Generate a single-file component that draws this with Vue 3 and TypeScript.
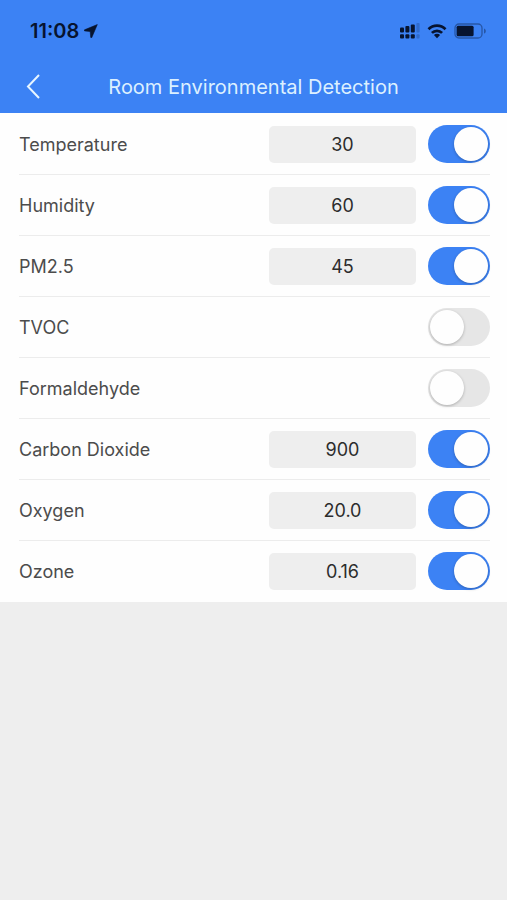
<script setup lang="ts">
import { ref } from 'vue'

interface Sensor {
  id: string
  name: string
  value: string
  enabled: boolean
}

const sensors = ref<Sensor[]>([
  { id: 'temperature', name: 'Temperature', value: '30', enabled: true },
  { id: 'humidity', name: 'Humidity', value: '60', enabled: true },
  { id: 'pm25', name: 'PM2.5', value: '45', enabled: true },
  { id: 'tvoc', name: 'TVOC', value: '', enabled: false },
  { id: 'formaldehyde', name: 'Formaldehyde', value: '', enabled: false },
  { id: 'co2', name: 'Carbon Dioxide', value: '900', enabled: true },
  { id: 'oxygen', name: 'Oxygen', value: '20.0', enabled: true },
  { id: 'ozone', name: 'Ozone', value: '0.16', enabled: true },
])
</script>

<template>
  <div class="screen">
    <header class="header">
      <div class="status">
        <div class="clock">
          <span>11:08</span>
          <svg width="14" height="14" viewBox="0 0 14 14" aria-hidden="true">
            <path d="M13.3.6.6 5.8c-.6.3-.5 1 .2 1.1l5.4.6.5 5.7c.1.7.8.8 1.1.2z" fill="currentColor" stroke="currentColor" stroke-width=".6" stroke-linejoin="round" />
          </svg>
        </div>
        <div class="indicators">
          <svg width="20" height="16" viewBox="0 0 20 16" aria-hidden="true">
            <g fill="currentColor">
              <rect x="0" y="4.5" width="4" height="5" rx="1" />
              <rect x="5.4" y="3" width="4" height="6.5" rx="1" />
              <rect x="10.8" y="1.4" width="4" height="8.1" rx="1" />
              <rect x="16.4" y="0" width="3.2" height="9.5" rx="1" opacity=".2" />
              <rect x="0" y="11.3" width="4" height="4.2" rx="1" />
              <rect x="5.4" y="11.3" width="4" height="4.2" rx="1" />
              <rect x="10.8" y="11.3" width="4" height="4.2" rx="1" />
              <rect x="16.4" y="11.3" width="3.2" height="4.2" rx="1" opacity=".2" />
            </g>
          </svg>
          <svg width="20" height="16" viewBox="0 0 20 16" aria-hidden="true">
            <g fill="none" stroke="currentColor" stroke-width="2.7">
              <path d="M1.5 6.2a12 12 0 0 1 17 0" />
              <path d="M4.9 9.9a7.2 7.2 0 0 1 10.2 0" />
            </g>
            <path d="M10 15.2 6.9 12.1a4.4 4.4 0 0 1 6.2 0z" fill="currentColor" />
          </svg>
          <svg width="33" height="16" viewBox="0 0 33 16" aria-hidden="true">
            <rect x="1" y="1" width="27" height="14" rx="4" fill="none" stroke="currentColor" stroke-width="1.3" opacity=".4" />
            <rect x="2.6" y="2.8" width="17" height="10.4" rx="1.5" fill="currentColor" />
            <path d="M30 5.4c2.4.7 2.4 4.5 0 5.2z" fill="currentColor" opacity=".4" />
          </svg>
        </div>
      </div>
      <nav class="navbar">
        <button class="back" type="button" aria-label="Back">
          <svg width="16" height="26" viewBox="0 0 16 26" aria-hidden="true">
            <path d="M14 1 3 12.5 14 24" fill="none" stroke="currentColor" stroke-width="2" />
          </svg>
        </button>
        <h1 class="title">Room Environmental Detection</h1>
      </nav>
    </header>

    <main class="list">
      <div v-for="sensor in sensors" :key="sensor.id" class="row">
        <label class="name" :for="sensor.id">{{ sensor.name }}</label>
        <input
          v-if="sensor.enabled"
          v-model="sensor.value"
          class="value"
          type="text"
          inputmode="decimal"
          :aria-label="`${sensor.name} value`"
        />
        <input :id="sensor.id" v-model="sensor.enabled" class="toggle" type="checkbox" role="switch" />
      </div>
    </main>
  </div>
</template>

<style>
body {
  background: #eeeeee;
}
</style>

<style scoped>
.screen {
  min-height: 100vh;
  background: #eeeeee;
  font-family: Inter, "Liberation Sans", sans-serif;
}

.header {
  background: #3c82f4;
}

.status {
  display: flex;
  align-items: center;
  justify-content: space-between;
  height: 60px;
  padding: 2px 20px 0 30px;
  box-sizing: border-box;
  color: #07142f;
}

.clock {
  display: flex;
  align-items: center;
  gap: 5px;
  font-size: 20px;
  font-weight: 600;
}

.indicators {
  display: flex;
  align-items: center;
  gap: 7px;
}

.navbar {
  display: grid;
  grid-template-columns: 48px 1fr 48px;
  align-items: center;
  height: 53px;
}

.back {
  display: flex;
  justify-content: flex-end;
  padding: 0 7px 0 0;
  border: 0;
  background: none;
  color: #e8f6ff;
}

.title {
  margin: 0;
  color: #dcf0ff;
  font-size: 20px;
  font-weight: 400;
  text-align: center;
}

.list {
  padding: 1px 17px 0 19px;
  background: #fefefe;
}

.row {
  display: flex;
  align-items: center;
  gap: 12px;
  height: 61px;
  box-sizing: border-box;
  border-bottom: 1px solid #ececec;
}

.row:last-child {
  border-bottom-color: transparent;
}

.name {
  flex: 1;
  color: #4c4c4c;
  font-size: 18px;
}

.value {
  width: 147px;
  height: 37px;
  box-sizing: border-box;
  padding: 0;
  border: 0;
  border-radius: 5px;
  background: #eeeeee;
  color: #2c2c2c;
  font: inherit;
  font-size: 18px;
  text-align: center;
}

.toggle {
  flex: none;
  display: flex;
  align-items: center;
  width: 62px;
  height: 38px;
  margin: 0;
  padding: 0 2px;
  box-sizing: border-box;
  appearance: none;
  border-radius: 19px;
  background: #e6e6e6;
}

.toggle::before {
  content: "";
  width: 34px;
  height: 34px;
  border-radius: 50%;
  background: #fefefe;
  box-shadow: 0 1px 3px rgba(0, 0, 0, 0.25);
}

.toggle:checked {
  justify-content: flex-end;
  background: #3c82f4;
}
</style>
